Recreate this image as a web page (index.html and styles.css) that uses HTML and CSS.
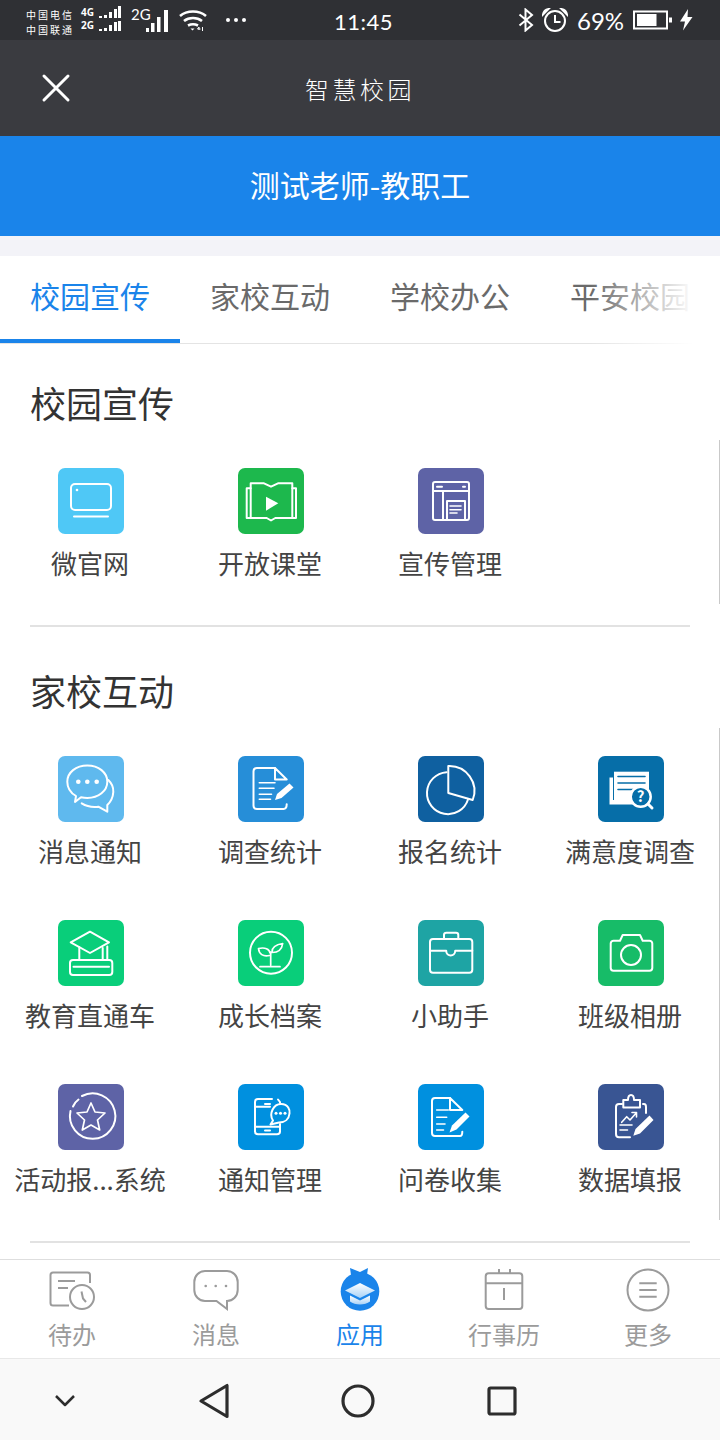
FILE: index.html
```html
<!DOCTYPE html>
<html lang="zh-CN">
<head>
    <meta charset="UTF-8">
    <meta name="viewport" content="width=device-width, initial-scale=1.0">
    <title>智慧校园</title>
    <link rel="stylesheet" href="styles.css">
</head>
<body>
<div class="phone">
    <div class="status-bar">
        <div class="status-left">
            <div class="carrier"><span>中国电信</span><span>中国联通</span></div>
            <div class="net-labels"><span>4G</span><span>2G</span></div>
            <svg class="net-bars" width="24" height="26" viewBox="0 0 24 26" fill="#fff">
                <rect x="1" y="10" width="3" height="2"/><rect x="6" y="9" width="3" height="3"/><rect x="11" y="6" width="3" height="6"/><rect x="16" y="3" width="3" height="9"/><rect x="20" y="0" width="3" height="12"/>
                <rect x="1" y="23" width="3" height="2"/><rect x="6" y="22" width="3" height="3"/><rect x="11" y="19" width="3" height="6"/><rect x="16" y="16" width="3" height="9"/><rect x="20" y="15" width="3" height="10"/>
            </svg>
            <span class="net-big">2G</span>
            <svg class="signal" width="23" height="24" viewBox="0 0 23 24" fill="#fff">
                <rect x="0" y="19" width="3" height="4"/><rect x="5" y="14" width="3.5" height="9"/><rect x="11" y="8" width="3.5" height="15"/><rect x="18" y="1" width="4" height="22"/>
            </svg>
            <svg class="wifi" width="28" height="22" viewBox="0 0 28 22" fill="none" stroke="#fff" stroke-width="2.6">
                <path d="M1 7C8 1 20 1 27 7"/><path d="M5 12C10 8 18 8 23 12"/><path d="M9 16.500C12 15 16 15 19 16.500"/>
                <path d="M11.500 19.500h4l-2 2z" fill="#fff" stroke="none"/>
                <path d="M20 21v-3l-1.500 2h3M23.500 18v4" stroke-width="1"/>
            </svg>
            <div class="more-dots"><i></i><i></i><i></i></div>
        </div>
        <span class="clock">11:45</span>
        <div class="status-right">
            <svg width="16" height="24" viewBox="0 0 16 24" fill="none" stroke="#fff" stroke-width="2">
                <path d="M1.500 6.500L14 17l-6.500 5.500V1.500L14 7 1.500 17.500"/>
            </svg>
            <svg class="alarm" width="26" height="24" viewBox="0 0 26 24" fill="none" stroke="#fff" stroke-width="2">
                <circle cx="13" cy="13" r="10"/><path d="M13 7v7h5.500"/>
                <path d="M1 6.500C1.500 3.500 3.500 1.500 6.500 1L1 6.500zM25 6.500C24.500 3.500 22.500 1.500 19.500 1L25 6.500z" fill="#fff"/>
            </svg>
            <span class="battery-text">69%</span>
            <svg class="battery" width="40" height="20" viewBox="0 0 40 20" fill="#fff">
                <rect x="1" y="1.500" width="33" height="17" fill="none" stroke="#fff" stroke-width="2"/>
                <rect x="4" y="4" width="19.500" height="12"/><rect x="36" y="7.500" width="3" height="5"/>
            </svg>
            <svg class="bolt" width="13" height="22" viewBox="0 0 13 22" fill="#fff">
                <path d="M8 0L0 12.500h5L3 21.500 12.500 8H7.500z"/>
            </svg>
        </div>
    </div>

    <header class="title-bar">
        <svg class="close-icon" width="30" height="30" viewBox="0 0 30 30" fill="none" stroke="#fff" stroke-width="3" stroke-linecap="round">
            <path d="M3 3l24 24M27 3L3 27"/>
        </svg>
        <span class="title-text">智慧校园</span>
    </header>

    <div class="user-bar">测试老师-教职工</div>

    <nav class="tabs">
        <a class="tab active">校园宣传</a>
        <a class="tab">家校互动</a>
        <a class="tab">学校办公</a>
        <a class="tab">平安校园</a>
        <div class="tabs-fade"></div>
    </nav>

    <main class="content">
        <section class="section">
            <h2>校园宣传</h2>
            <div class="grid">
                <div class="app">
                    <svg class="app-icon c-sky" viewBox="0 0 66 66">
                        <rect x="13" y="16" width="40" height="26" rx="4"/><path d="M16 48.500h34"/><circle class="dot" cx="19" cy="22" r="1.300"/>
                    </svg>
                    <span>微官网</span>
                </div>
                <div class="app">
                    <svg class="app-icon c-green" viewBox="0 0 66 66">
                        <path d="M12.700 20.300H8.700V50H28.700L33 52.500 37.300 50H58V20.300H54.300"/>
                        <path d="M12.700 49V15.300H26L33 18.700 40 15.300H54.300V49"/>
                        <path class="solid" d="M28 28.700L40.300 35.300 28 42.700z"/>
                    </svg>
                    <span>开放课堂</span>
                </div>
                <div class="app">
                    <svg class="app-icon c-purple" viewBox="0 0 66 66">
                        <rect x="15" y="14" width="36" height="38" rx="2"/><path d="M15 23h36M25 23v29M29 52V33h18v19"/>
                        <path class="thin" d="M32 38h11M32 41.700h11M32 45h7"/><path d="M19 18.700h5M45 18.700h2"/>
                    </svg>
                    <span>宣传管理</span>
                </div>
                <div class="scroll-mark"></div>
            </div>
        </section>

        <section class="section">
            <h2>家校互动</h2>
            <div class="grid">
                <div class="app">
                    <svg class="app-icon c-sky2" viewBox="0 0 66 66">
                        <path d="M17 46L18 40C12 36.500 9.300 31.500 9.300 25.700 9.300 16.500 18 9.500 29.300 9.500S49.300 16.500 49.300 25.700 40.500 42 29.300 42C27 42 25 41.700 23 41.200z"/>
                        <path d="M50.300 24C54 27.500 55.500 32 55.300 36 55 41 53 45.500 49.300 49V55.700L40.300 50.700C34 51.500 28 50 23.700 47.300"/>
                        <circle class="solid" cx="20.300" cy="25.700" r="2.300"/><circle class="solid" cx="29.300" cy="25.700" r="2.300"/><circle class="solid" cx="38.700" cy="25.700" r="2.300"/>
                    </svg>
                    <span>消息通知</span>
                </div>
                <div class="app">
                    <svg class="app-icon c-blue" viewBox="0 0 66 66">
                        <path d="M37 12H19C17 12 15.500 13.500 15.500 15.500V49.500C15.500 51.500 17 53 19 53H45.500C47.500 53 48.700 51.500 48.700 48.300"/>
                        <path d="M37 12V23.500H48.700zM37 12L48.700 23.500"/>
                        <path class="thin" d="M21.300 26.700H37M21.300 32.300H36M21.300 38.300H33.500M21.300 43.300H32.500"/>
                        <path class="solid" d="M37 44L39 38 51.500 27.500 55.500 31.500 43.500 42z"/>
                    </svg>
                    <span>调查统计</span>
                </div>
                <div class="app">
                    <svg class="app-icon c-navy" viewBox="0 0 66 66">
                        <path d="M28.500 16.200A21 21 0 1 0 50 43.500"/>
                        <path d="M30.300 10V37L54.700 44A25 25 0 0 0 30.300 10z"/>
                    </svg>
                    <span>报名统计</span>
                </div>
                <div class="app">
                    <svg class="app-icon c-ocean" viewBox="0 0 66 66">
                        <path class="solid" d="M11.500 21.500h3.500V44H44v4.500H11.500z"/>
                        <rect class="solid" x="16" y="15.700" width="35" height="28.300"/>
                        <path class="cut" d="M20 20.500h27M20 27h27M20 33.500h16"/>
                        <circle class="ring" cx="42.700" cy="40.700" r="10"/>
                        <path d="M50 48l4 4" stroke-width="3"/>
                        <text class="q-mark" x="42.700" y="46">?</text>
                    </svg>
                    <span>满意度调查</span>
                </div>

                <div class="app">
                    <svg class="app-icon c-mint" viewBox="0 0 66 66">
                        <path d="M32 11.700L51 22.300 32 33 12.700 22.300z"/><path d="M21.300 27.300V40M44.700 28V40M49.300 26.500V40"/>
                        <rect x="12" y="40" width="42.300" height="15" rx="3"/><path d="M15.500 46.700H51"/>
                    </svg>
                    <span>教育直通车</span>
                </div>
                <div class="app">
                    <svg class="app-icon c-mint" viewBox="0 0 66 66">
                        <circle cx="33" cy="32.700" r="21"/>
                        <path class="thin-2" d="M32.700 32V45M22 46.700H42M32 33C31.500 29 27 27 20.500 28.500 21 34 25 37 31.500 35.500M34 32C34 27 38 24.500 44.700 23.500 44 29 41 32.500 34 32.500"/>
                    </svg>
                    <span>成长档案</span>
                </div>
                <div class="app">
                    <svg class="app-icon c-teal" viewBox="0 0 66 66">
                        <rect x="12" y="19" width="42.300" height="33.700" rx="3"/><path d="M26 19V15C26 13.500 27 12.700 28.500 12.700H38C39.500 12.700 40.300 13.500 40.300 15V19"/>
                        <path d="M12 30.700H28.200C28.200 37 37.200 37 37.200 30.700H54.300"/>
                    </svg>
                    <span>小助手</span>
                </div>
                <div class="app">
                    <svg class="app-icon c-leaf" viewBox="0 0 66 66">
                        <path d="M15.500 20.700H22L24.700 15H42L44.700 20.700H51.500C53 20.700 54.300 22 54.300 23.500V48C54.300 49.700 53 50.700 51.500 50.700H15.500C14 50.700 12.700 49.700 12.700 48V23.500C12.700 22 14 20.700 15.500 20.700z"/>
                        <circle cx="33" cy="35" r="10"/>
                    </svg>
                    <span>班级相册</span>
                </div>

                <div class="app">
                    <svg class="app-icon c-purple" viewBox="0 0 66 66">
                        <path d="M12.500 27A22.700 22.700 0 1 0 24 12"/><path d="M15 22.500Q17 18 20.500 15.500"/>
                        <path class="thin-2" d="M33 19L37 28 47 29 39.500 36 41.700 46 33 41 24.300 46 26.500 36 19 29 29 28z"/>
                    </svg>
                    <span>活动报...系统</span>
                </div>
                <div class="app">
                    <svg class="app-icon c-azure" viewBox="0 0 66 66">
                        <path d="M34 15H20C18 15 17 16.200 17 18V47.500C17 49.200 18 50.300 20 50.300H39C41 50.300 42 49.200 42 47.500V40"/>
                        <path d="M17 22.700H32M17 42.700H42M40 15.500L42 18V19M27 20h5M27 46.500h5"/>
                        <path d="M32.500 40.500L35 36.500C30.500 30 35.500 20 43 20S52 26 51.500 29.500C51 35 47 38.500 41 38.500z" class="fill-bg"/>
                        <circle class="solid" cx="38" cy="29.300" r="1.500"/><circle class="solid" cx="42.500" cy="29.300" r="1.500"/><circle class="solid" cx="47" cy="29.300" r="1.500"/>
                    </svg>
                    <span>通知管理</span>
                </div>
                <div class="app">
                    <svg class="app-icon c-azure" viewBox="0 0 66 66">
                        <path d="M32 14H17C15 14 14 15.500 14 17V49C14 51 15.500 52 17 52H42C44 52 44.300 50 44.300 47.700"/>
                        <path d="M32 14V26H44.300zM32 14L44.300 26"/>
                        <path class="thin" d="M18.700 26H30.300M18.700 33.300H28.700M18.700 40H27M18.700 46H25.500"/>
                        <path class="solid" d="M31.500 48.500L34 41.500 47.500 28.500 51.500 32.500 38.500 45.500z"/>
                    </svg>
                    <span>问卷收集</span>
                </div>
                <div class="app">
                    <svg class="app-icon c-indigo" viewBox="0 0 66 66">
                        <path d="M24 20H21C19 20 18 21 18 23V50C18 52 19 53.300 21 53.300H32"/>
                        <path d="M45 20H46C47.500 20 48 21 48 23V29"/>
                        <path d="M25.300 16H30C30 12 31.500 11 33 11S36 12 36 16H42V23.500H25.300z"/>
                        <path class="thin" d="M23.700 38.300L28.700 32.700 32 36 38 29.300M34 28.500H38.500V33M22 41H34M22 46H29.500"/>
                        <path class="solid" d="M35.300 51.700L37.500 45 51.500 31.500 55.500 36 42 49.500z"/>
                    </svg>
                    <span>数据填报</span>
                </div>
                <div class="scroll-mark"></div>
            </div>
        </section>
    </main>

    <footer class="bottom-tabs">
        <a class="bottom-tab">
            <svg width="48" height="44" viewBox="0 0 48 44" class="tab-icon">
                <path d="M42 15V7C42 5.500 41 4.500 39.500 4.500H5C3.500 4.500 2.500 5.500 2.500 7V35C2.500 36.500 3.500 37.500 5 37.500H21"/>
                <path d="M10 13H27M10 20H20"/><circle cx="34" cy="29" r="12"/><path d="M33.500 23.500L35 30.500 38 34"/>
            </svg>
            <span>待办</span>
        </a>
        <a class="bottom-tab">
            <svg width="48" height="44" viewBox="0 0 48 44" class="tab-icon">
                <path d="M13 3H35C41 3 45.700 8 45.700 14V22C45.700 28 41 33 35 33V41L24.500 33H13C7 33 2.300 28 2.300 22V14C2.300 8 7 3 13 3z"/>
                <circle class="tab-dot" cx="13.700" cy="18" r="1.300"/><circle class="tab-dot" cx="23.700" cy="18" r="1.300"/><circle class="tab-dot" cx="34" cy="18" r="1.300"/>
            </svg>
            <span>消息</span>
        </a>
        <a class="bottom-tab current">
            <svg width="48" height="44" viewBox="0 0 48 44">
                <defs>
                    <linearGradient id="capGrad" x1="0" y1="0" x2="0" y2="1">
                        <stop offset="0" stop-color="#ffffff"/><stop offset="1" stop-color="#a9d2f7"/>
                    </linearGradient>
                </defs>
                <path d="M14 0L24 4 32 0 31 7 24 12 15 7z" fill="#1a84ea"/>
                <circle cx="24" cy="23.500" r="19.300" fill="#1a84ea"/>
                <path d="M24 15L39 22.500 24 30 9 22.500z" fill="url(#capGrad)"/>
                <path d="M14 27.500V33.500C19 37.500 29 37.500 34 33.500V27.500L24 32.500z" fill="url(#capGrad)"/>
            </svg>
            <span>应用</span>
        </a>
        <a class="bottom-tab">
            <svg width="48" height="44" viewBox="0 0 48 44" class="tab-icon">
                <rect x="5.700" y="5.300" width="36.600" height="35.700" rx="3"/>
                <path d="M5.700 15.300H42.300M19 1V5.300M30 1V5.300M24 20V32"/>
            </svg>
            <span>行事历</span>
        </a>
        <a class="bottom-tab">
            <svg width="48" height="44" viewBox="0 0 48 44" class="tab-icon">
                <circle cx="24" cy="22" r="20.500"/><path d="M15.300 15.300H32.700M15.300 22H32.700M15.300 28.700H32.700"/>
            </svg>
            <span>更多</span>
        </a>
    </footer>

    <div class="nav-bar">
        <svg width="28" height="16" viewBox="0 0 28 16" class="nav-icon"><path d="M5 3l9 9 9-9"/></svg>
        <svg width="34" height="36" viewBox="0 0 34 36" class="nav-icon nav-thick"><path d="M3 18L29 2.500V33.500z"/></svg>
        <svg width="34" height="34" viewBox="0 0 34 34" class="nav-icon nav-thick"><circle cx="17" cy="17" r="15"/></svg>
        <svg width="30" height="30" viewBox="0 0 30 30" class="nav-icon nav-thick"><rect x="2" y="2" width="26" height="26" rx="1.500"/></svg>
    </div>
</div>
</body>
</html>
```

FILE: styles.css
```css
body {
    margin: 0;
    font-family: "Noto Sans CJK SC", "Noto Sans", sans-serif;
    color: #333;
}
.phone {
    width: 720px;
    height: 1440px;
    display: flex;
    flex-direction: column;
    overflow: hidden;
    background: #fff;
}

/* status bar */
.status-bar {
    height: 40px;
    flex: none;
    display: flex;
    align-items: center;
    padding: 0 27px 0 26px;
    background: #2f3034;
    color: #fff;
}
.status-left {
    width: 308px;
    display: flex;
    align-items: center;
}
.carrier {
    width: 55px;
    display: flex;
    flex-direction: column;
    font-size: 10px;
    line-height: 15px;
    letter-spacing: 2px;
    white-space: nowrap;
    margin-top: 3px;
}
.net-labels {
    width: 17px;
    display: flex;
    flex-direction: column;
    font-family: "Noto Sans", sans-serif;
    font-size: 10px;
    font-weight: 700;
    line-height: 13px;
    margin-top: -2px;
}
.net-bars {
    margin-top: -3px;
}
.net-big {
    margin-left: 9px;
    width: 15px;
    font-family: "Lato", sans-serif;
    font-size: 15px;
    margin-top: -12px;
}
.signal {
    margin-top: 2px;
}
.wifi {
    margin-left: 10px;
}
.more-dots {
    margin-left: 19px;
    display: flex;
    gap: 4px;
}
.more-dots i {
    width: 4px;
    height: 4px;
    border-radius: 50%;
    background: #fff;
}
.clock {
    font-family: "Lato", sans-serif;
    font-size: 22px;
    letter-spacing: 0.5px;
    padding-top: 2px;
}
.status-right {
    margin-left: auto;
    display: flex;
    align-items: center;
}
.alarm {
    margin-left: 8px;
}
.battery-text {
    margin-left: 9px;
    font-family: "Lato", sans-serif;
    font-size: 24px;
    width: 56px;
}
.battery {
    margin-right: 7px;
}

/* title */
.title-bar {
    height: 96px;
    flex: none;
    display: grid;
    grid-template-columns: 1fr auto 1fr;
    align-items: center;
    padding: 0 40px;
    background: #3a3b40;
    box-sizing: border-box;
}
.title-text {
    color: #fff;
    font-size: 24px;
    letter-spacing: 3.500px;
    font-weight: 300;
}
.close-icon {
    display: block;
    margin-left: 1px;
    margin-bottom: 1px;
}
.user-bar {
    height: 100px;
    flex: none;
    box-sizing: border-box;
    padding-bottom: 4px;
    display: flex;
    align-items: center;
    justify-content: center;
    background: #1a84ea;
    color: #fff;
    font-size: 30px;
}

/* tabs */
.tabs {
    position: relative;
    flex: none;
    height: 88px;
    margin-top: 20px;
    display: flex;
    border-bottom: 1px solid #e4e4e4;
    box-sizing: border-box;
    box-shadow: 0 -20px 0 #f3f3f8;
}
.tab {
    width: 180px;
    flex: none;
    text-align: center;
    font-size: 30px;
    line-height: 78px;
    color: #6a6a6a;
    white-space: nowrap;
}
.tab.active {
    color: #1a84ea;
    border-bottom: 4px solid #1a84ea;
    height: 83px;
}
.tabs-fade {
    position: absolute;
    right: 0;
    top: 0;
    bottom: -1px;
    width: 130px;
    background: linear-gradient(to right, rgba(255, 255, 255, 0), #fff 80%);
}

/* app grid */
.content {
    flex: 1;
    min-height: 0;
    overflow: hidden;
}
.section {
    padding-top: 41px;
    border-bottom: 2px solid #e2e2e2;
    margin: 0 30px;
}
.section:first-child {
    padding-top: 36px;
}
.section h2 {
    margin: 0;
    padding-bottom: 4px;
    font-size: 36px;
    font-weight: 400;
    line-height: 44px;
}
.grid {
    position: relative;
    display: grid;
    grid-template-columns: repeat(4, 180px);
    row-gap: 50px;
    margin: 40px -30px 43px;
}
.app {
    display: flex;
    flex-direction: column;
    align-items: center;
    gap: 12px;
    padding-bottom: 2px;
}
.app span {
    font-size: 26px;
    line-height: 34px;
    white-space: nowrap;
    color: #444;
}
.scroll-mark {
    position: absolute;
    right: 0;
    top: -28px;
    bottom: -22px;
    width: 1px;
    background: #c9c9c9;
}

/* icon tiles */
.app-icon {
    width: 66px;
    height: 66px;
    margin-left: 2px;
    border-radius: 7px;
    fill: none;
    stroke: #fff;
    stroke-width: 2;
    stroke-linejoin: round;
    stroke-linecap: round;
}
.app-icon .solid {
    fill: #fff;
    stroke: none;
}
.app-icon .dot {
    fill: #fff;
    stroke: none;
}
.app-icon .thin {
    stroke-width: 1.600;
}
.app-icon .thin-2 {
    stroke-width: 1.700;
}
.c-sky { background: #4fc8f6; }
.c-sky2 { background: #5fb9ee; }
.c-green { background: #1db84d; }
.c-purple { background: #5e63a6; }
.c-blue { background: #268ed8; }
.c-navy { background: #0f60a0; }
.c-ocean { background: #066ea8; }
.c-mint { background: #09ce7a; }
.c-teal { background: #1ea4a4; }
.c-leaf { background: #17bc68; }
.c-azure { background: #0090df; }
.c-indigo { background: #395593; }
.c-ocean .cut {
    stroke: #066ea8;
    stroke-width: 1.600;
}
.c-ocean .ring {
    fill: #066ea8;
    stroke: #fff;
    stroke-width: 2.500;
}
.c-ocean .q-mark {
    fill: #fff;
    stroke: none;
    font-size: 15px;
    font-weight: 700;
    text-anchor: middle;
}
.c-azure .fill-bg {
    fill: #0090df;
}

/* bottom tabs */
.bottom-tabs {
    flex: none;
    height: 99px;
    display: grid;
    grid-template-columns: repeat(5, 144px);
    border-top: 1px solid #dedede;
    box-sizing: border-box;
    padding-top: 8px;
    background: #fff;
}
.bottom-tab {
    display: flex;
    flex-direction: column;
    align-items: center;
    gap: 8px;
    font-size: 24px;
    line-height: 28px;
    color: #9b9b9b;
}
.bottom-tab.current {
    color: #1a84ea;
}
.tab-icon {
    fill: none;
    stroke: #9b9b9b;
    stroke-width: 2;
}
.tab-icon .tab-dot {
    fill: #9b9b9b;
    stroke: none;
}

/* android nav */
.nav-bar {
    flex: none;
    height: 82px;
    box-sizing: border-box;
    padding-top: 3px;
    display: grid;
    grid-template-columns: 130px 170px 116px 172px;
    justify-items: center;
    align-items: center;
    background: #f9f9f9;
    border-top: 1px solid #e8e8e8;
}
.nav-icon {
    fill: none;
    stroke: #2d2d2d;
    stroke-width: 2.500;
    stroke-linejoin: round;
}
.nav-thick {
    stroke-width: 3.200;
}
```
